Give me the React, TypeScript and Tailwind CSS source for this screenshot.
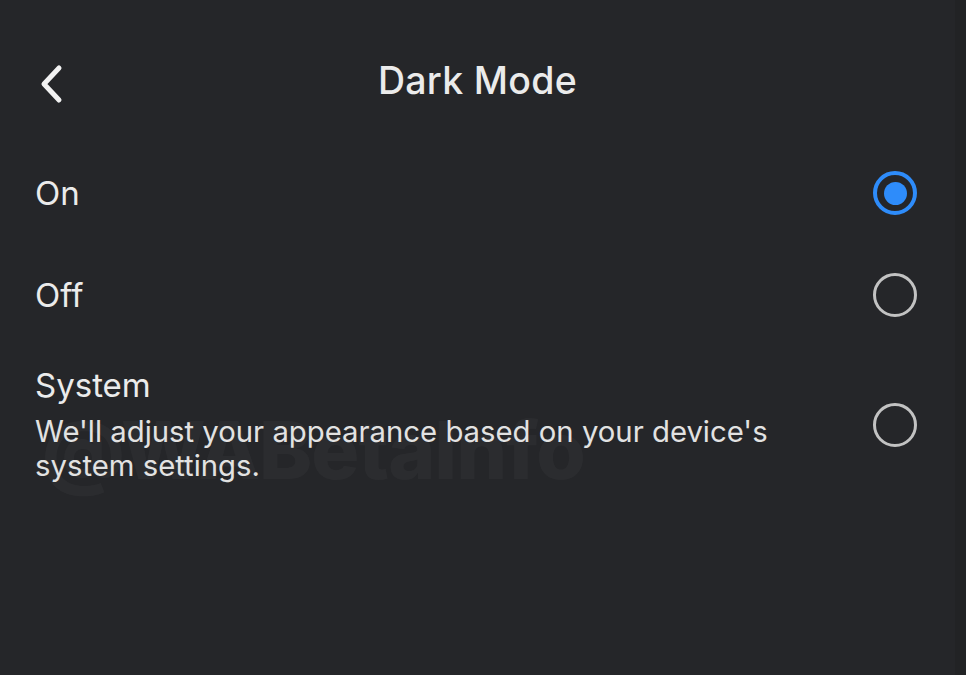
import { useState } from "react";

type Option = {
  id: string;
  label: string;
  hint?: string;
};

const OPTIONS: Option[] = [
  { id: "on", label: "On" },
  { id: "off", label: "Off" },
  {
    id: "system",
    label: "System",
    hint: "We'll adjust your appearance based on your device's system settings.",
  },
];

export default function App() {
  const [mode, setMode] = useState("on");

  return (
    <div
      className="relative w-[966px] h-[675px] overflow-hidden bg-[#252629] text-[#ebebeb]"
      style={{ fontFamily: "Inter, 'Open Sans', 'Liberation Sans', sans-serif" }}
    >
      {/* header */}
      <div className="relative flex h-[162px] items-center justify-center pr-[11px]">
        <button className="absolute left-[33px] top-[58px] p-1">
          <svg width="30" height="44" viewBox="0 0 30 44" fill="none">
            <path
              d="M22 6 L7 22 L22 38"
              stroke="#f2f2f2"
              strokeWidth="5"
              strokeLinecap="round"
              strokeLinejoin="round"
            />
          </svg>
        </button>
        <h1 className="text-[37.5px] font-medium tracking-[0.3px]">Dark Mode</h1>
      </div>

      {/* options */}
      <div className="flex flex-col gap-[40px] pl-[35px] pr-[49px]">
        {OPTIONS.map((o) => (
          <Row
            key={o.id}
            option={o}
            selected={mode === o.id}
            onSelect={() => setMode(o.id)}
          />
        ))}
      </div>

      {/* watermark */}
      <div className="pointer-events-none absolute left-[42px] top-[410px] text-[80px] font-extrabold leading-none tracking-[-1px] text-white/[0.03]">
        @WABetaInfo
      </div>

      <div className="absolute right-0 top-0 h-full w-[11px] bg-[#222325]" />
    </div>
  );
}

function Row({
  option,
  selected,
  onSelect,
}: {
  option: Option;
  selected: boolean;
  onSelect: () => void;
}) {
  return (
    <div
      onClick={onSelect}
      className={`flex cursor-pointer items-center justify-between ${
        option.hint ? "min-h-[110px]" : "h-[62px]"
      }`}
    >
      <div className="max-w-[790px]">
        <div className="text-[33px] leading-[38px]">{option.label}</div>
        {option.hint && (
          <p className="mt-[11px] text-[29.3px] leading-[34px] text-[#e2e2e2]">{option.hint}</p>
        )}
      </div>
      <Radio selected={selected} />
    </div>
  );
}

function Radio({ selected }: { selected: boolean }) {
  if (selected) {
    return (
      <div className="flex h-[44px] w-[44px] items-center justify-center rounded-full border-[4px] border-[#2e8cfa]">
        <div className="h-[23px] w-[23px] rounded-full bg-[#2e8cfa]" />
      </div>
    );
  }
  return <div className="h-[44px] w-[44px] rounded-full border-[3.5px] border-[#c2c2c2]" />;
}
